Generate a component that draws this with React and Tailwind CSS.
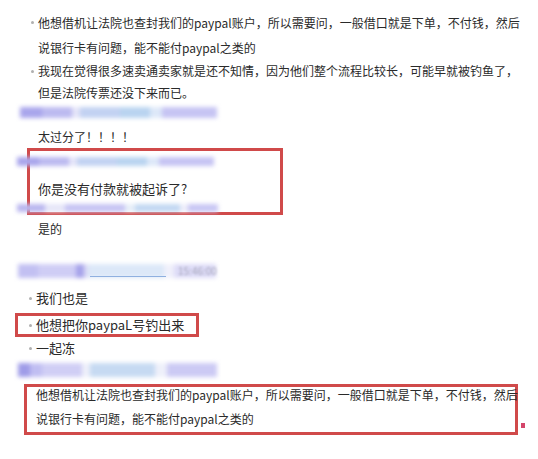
// Chat screenshot with red annotation boxes

const FONT = { fontFamily: '"Noto Sans CJK SC", "Microsoft YaHei", sans-serif' }

// ── Blurred name bar ───────────────────────────────────────────────────────
function Blur({ segs, className = '' }) {
  return (
    <div className={`flex items-stretch blur-[2px] ${className}`}>
      {segs.map((s, i) => (
        <div key={i} style={{ width: s.w, background: s.c }} />
      ))}
    </div>
  )
}

function Dot() {
  return <span className="w-[3px] h-[3px] rounded-full bg-[#b0b0b0]" />
}

const barA = [
  { w: 22, c: '#a9a6ec' },
  { w: 30, c: '#bcbaf0' },
  { w: 8, c: '#e4e4f8' },
  { w: 40, c: '#c2d2f2' },
  { w: 30, c: '#b9d4f0' },
  { w: 12, c: '#dde8f8' },
  { w: 55, c: '#c6c4f3' },
]

export default function App() {
  return (
    <div className="w-[538px] h-[459px] bg-white overflow-hidden text-[#2a2a2a] pt-[10px]" style={FONT}>
      {/* first quoted list */}
      <div className="text-[12px] whitespace-nowrap">
        <div className="flex items-center h-[25px] pl-[31px] gap-[4px]">
          <Dot />
          <span>他想借机让法院也查封我们的paypal账户，所以需要问，一般借口就是下单，不付钱，然后</span>
        </div>
        <div className="flex items-center h-[25px] pl-[38px]">说银行卡有问题，能不能付paypal之类的</div>
        <div className="flex items-center h-[22px] pl-[31px] gap-[4px]">
          <Dot />
          <span>我现在觉得很多速卖通卖家就是还不知情，因为他们整个流程比较长，可能早就被钓鱼了，</span>
        </div>
        <div className="flex items-center h-[22px] pl-[38px]">但是法院传票还没下来而已。</div>
      </div>

      <Blur segs={barA} className="mt-[3px] h-[11px] ml-[20px]" />

      <div className="mt-[8px] h-[22px] flex items-center pl-[38px] text-[12px]">太过分了！！！！</div>

      {/* box 1 */}
      <div className="ml-[27px] w-[256px] border-[3px] border-[#d04a4a]">
        <Blur segs={barA} className="-ml-[13px] mt-[6px] h-[9px]" />
        <div className="mt-[12px] h-[22px] flex items-center pl-[8px] text-[13px]">你是没有付款就被起诉了?</div>
        <Blur
          segs={[
            { w: 28, c: '#b9b6ef' },
            { w: 20, c: '#e6e6f8' },
            { w: 60, c: '#c6c4f3' },
            { w: 10, c: '#e6eef8' },
            { w: 45, c: '#c2d8f2' },
            { w: 8, c: '#eeeefa' },
            { w: 30, c: '#c8c6f4' },
          ]}
          className="-ml-[13px] mt-[4px] h-[8px]"
        />
      </div>

      <div className="mt-[3px] h-[22px] flex items-center pl-[38px] text-[12px]">是的</div>

      {/* username line */}
      <div className="relative mt-[24px] h-[14px] ml-[18px] w-[212px]">
        <Blur
          segs={[
            { w: 20, c: '#c2c0f2' },
            { w: 38, c: '#cfcdf5' },
            { w: 8, c: '#a6a3ea' },
            { w: 4, c: '#dcdaf6' },
            { w: 76, c: '#dce8f8' },
            { w: 10, c: '#f0f0fb' },
            { w: 42, c: '#dddbf7' },
          ]}
          className="h-[14px]"
        />
        <div className="absolute left-[72px] bottom-[1px] w-[76px] h-[1px] bg-[#8fb0e0] blur-[0.5px]" />
        <div className="absolute left-[160px] top-[2px] text-[10px] leading-[10px] text-[#a9a9bd] blur-[1px]">15:46:00</div>
      </div>

      {/* second list */}
      <div className="text-[13px] whitespace-nowrap">
        <div className="mt-[8px] h-[24px] flex items-center pl-[29px] gap-[4px]">
          <Dot />
          <span>我们也是</span>
        </div>
        <div className="mt-[3px] ml-[15px] w-[184px] h-[24px] border-[3px] border-[#d04a4a] flex items-center pl-[11px] gap-[4px]">
          <Dot />
          <span>他想把你paypaL号钓出来</span>
        </div>
        <div className="h-[22px] flex items-center pl-[29px] gap-[4px]">
          <Dot />
          <span>一起冻</span>
        </div>
      </div>

      <Blur
        segs={[
          { w: 12, c: '#9f9ce8' },
          { w: 12, c: '#c0bef2' },
          { w: 40, c: '#d0cef5' },
          { w: 8, c: '#eef0fa' },
          { w: 65, c: '#c6daf2' },
          { w: 12, c: '#eef0fa' },
          { w: 50, c: '#cccaf4' },
        ]}
        className="mt-[4px] h-[14px] ml-[18px]"
      />

      {/* box 3 */}
      <div className="flex items-end mt-[7px]">
        <div className="ml-[24px] w-[494px] border-[3px] border-[#d04a4a] text-[12px] whitespace-nowrap pl-[9px] pb-[6px]">
          <div className="h-[15px] flex items-center">他想借机让法院也查封我们的paypal账户，所以需要问，一般借口就是下单，不付钱，然后</div>
          <div className="mt-[9px] h-[15px] flex items-center">说银行卡有问题，能不能付paypal之类的</div>
        </div>
        <div className="ml-[3px] mb-[7px] w-[4px] h-[5px] bg-[#d4456a]" />
      </div>
    </div>
  )
}
